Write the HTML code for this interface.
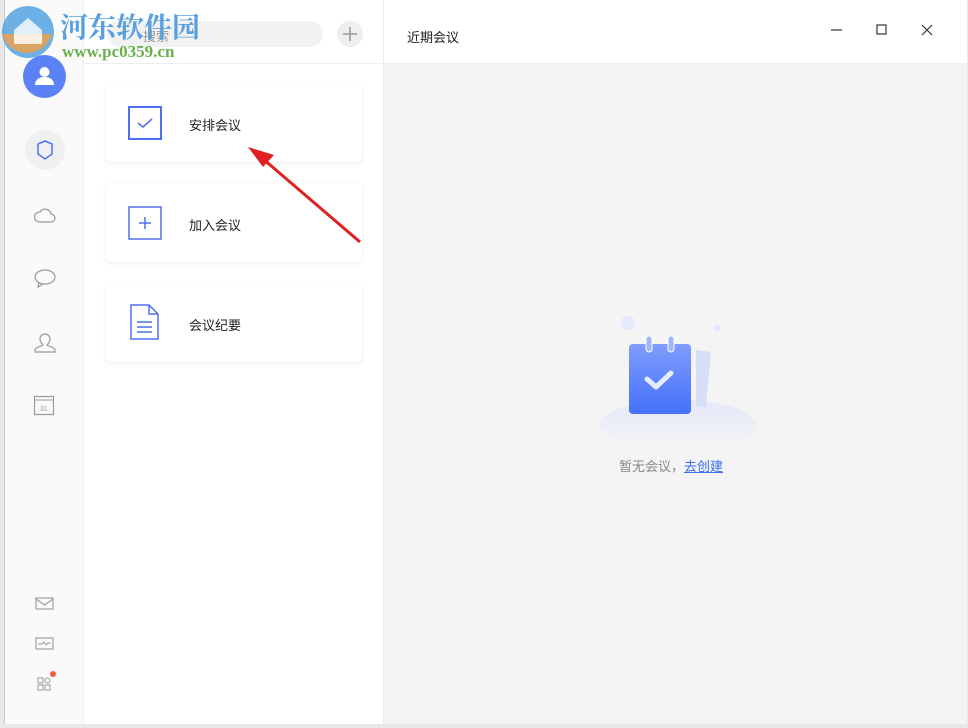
<!DOCTYPE html><html><head><meta charset="utf-8"><style>
*{margin:0;padding:0;box-sizing:border-box}
body{width:968px;height:728px;background:#e8e8e8;font-family:"Liberation Sans","Noto Sans CJK SC",sans-serif;position:relative;overflow:hidden}
.win{position:absolute;left:4px;top:0;width:962px;height:724px;background:#fff;border-left:1px solid #ccc}
.side{position:absolute;left:0;top:0;width:79px;height:724px;background:#fafafa;border-right:1px solid #eee}
.mid{position:absolute;left:79px;top:0;width:300px;height:724px;background:#fff;border-right:1px solid #eee}
.right{position:absolute;left:379px;top:0;width:583px;height:724px;background:#f4f4f4}
.rh{height:64px;background:#fff;border-bottom:1px solid #eee;position:relative}
.card{position:absolute;left:22px;width:256px;height:78px;background:#fff;border-radius:6px;box-shadow:0 1px 6px rgba(0,0,0,.08)}
.card span{position:absolute;left:83px;top:31px;font-size:13px;color:#222}
.card svg{position:absolute;left:22px;top:22px}
.ico{position:absolute}
</style></head><body>
<div class="win">
<div class="side">
 <div class="ico" style="left:18px;top:55px;width:43px;height:43px;border-radius:50%;background:#5b82f5"><svg width="43" height="43"><circle cx="21.5" cy="17" r="5" fill="#fff"/><path d="M12 30c0-6 5-8 9.5-8s9.5 2 9.5 8z" fill="#fff"/></svg></div>
 <div class="ico" style="left:20px;top:130px;width:40px;height:40px;border-radius:50%;background:#f0f0f0"><svg width="40" height="40"><path d="M13 14l7-3 7 3v10l-7 5-7-5z" fill="none" stroke="#4f74f0" stroke-width="1.5"/></svg></div>
 <svg class="ico" style="left:26px;top:200px" width="28" height="28"><path d="M8 22h12a4 4 0 0 0 0-8 6 6 0 0 0-11-2 5 5 0 0 0-1 10z" fill="none" stroke="#999" stroke-width="1.2"/></svg>
 <svg class="ico" style="left:26px;top:264px" width="28" height="28"><ellipse cx="14" cy="13" rx="10" ry="7" fill="none" stroke="#999" stroke-width="1.2"/><path d="M8 18l-1 5 5-3" fill="none" stroke="#999" stroke-width="1.2"/></svg>
 <svg class="ico" style="left:26px;top:328px" width="28" height="28"><path d="M9 11a5 5 0 0 1 10 0c0 3-2 5-3 6 0 1 8 2 8 5v2H4v-2c0-3 8-4 8-5-1-1-3-3-3-6z" fill="none" stroke="#999" stroke-width="1.2"/></svg>
 <svg class="ico" style="left:28px;top:394px" width="24" height="24"><rect x="1.5" y="2.5" width="19" height="18" fill="none" stroke="#999" stroke-width="1.2"/><path d="M1.5 6h19" stroke="#999"/><text x="7" y="17" font-size="7" fill="#999" font-family="Liberation Sans">31</text></svg>
 <svg class="ico" style="left:30px;top:596px" width="20" height="16"><rect x="1" y="2" width="17" height="11" fill="none" stroke="#999" stroke-width="1.1"/><path d="M1 3l8.5 6L18 3" fill="none" stroke="#999" stroke-width="1.1"/></svg>
 <svg class="ico" style="left:30px;top:636px" width="20" height="16"><rect x="1" y="2" width="17" height="11" fill="none" stroke="#999" stroke-width="1.1"/><path d="M3 8h4l2-2 2 3 2-2h3" fill="none" stroke="#999"/></svg>
 <svg class="ico" style="left:30px;top:670px" width="24" height="24"><rect x="3" y="8" width="5" height="5" fill="none" stroke="#999"/><rect x="3" y="15" width="5" height="5" fill="none" stroke="#999"/><rect x="10" y="15" width="5" height="5" fill="none" stroke="#999"/><circle cx="12.5" cy="10.5" r="2.5" fill="none" stroke="#999"/><circle cx="18" cy="4" r="3" fill="#f55b3b"/></svg>
</div>
<div class="mid">
 <div style="position:absolute;left:23px;top:21px;width:216px;height:26px;border-radius:13px;background:#f2f2f2"><span style="position:absolute;left:36px;top:5px;font-size:13px;color:#999">搜索</span></div>
 <div style="position:absolute;left:253px;top:21px;width:26px;height:26px;border-radius:50%;background:#eee"><svg width="26" height="26"><path d="M13 6v14M6 13h14" stroke="#999" stroke-width="1.6"/></svg></div>
 <div style="position:absolute;left:0;top:63px;width:299px;border-top:1px solid #eee"></div>
 <div class="card" style="top:84px"><svg width="34" height="34"><rect x="1" y="1" width="32" height="32" fill="none" stroke="#4f6ff0" stroke-width="2"/><path d="M10 17l5 4 9-8" fill="none" stroke="#4f6ff0" stroke-width="1.6"/></svg><span>安排会议</span></div>
 <div class="card" style="top:184px"><svg width="34" height="34"><rect x="1" y="1" width="32" height="32" fill="none" stroke="#4f6ff0" stroke-width="1.5"/><path d="M17 11v12M11 17h12" stroke="#4f6ff0" stroke-width="1.5"/></svg><span>加入会议</span></div>
 <div class="card" style="top:284px"><svg width="34" height="36" style="top:20px"><path d="M3 1h18l9 9v25H3z" fill="none" stroke="#4f6ff0" stroke-width="1.5"/><path d="M21 1v9h9M9 18h15M9 23h15M9 28h15" fill="none" stroke="#4f6ff0" stroke-width="1.5"/></svg><span>会议纪要</span></div>
</div>
<div class="right">
 <div class="rh"><span style="position:absolute;left:23px;top:27px;font-size:13px;color:#222">近期会议</span>
 <svg style="position:absolute;left:445px;top:22px" width="120" height="16"><path d="M2 8h11" stroke="#333" stroke-width="1.2"/><rect x="48" y="3" width="9" height="9" fill="none" stroke="#333" stroke-width="1.2"/><path d="M93 3l10 10M103 3l-10 10" stroke="#333" stroke-width="1.2"/></svg></div>
 <svg style="position:absolute;left:212px;top:310px" width="160" height="130">
  <defs><linearGradient id="g" x1="0" y1="0" x2="0" y2="1"><stop offset="0" stop-color="#7f9dfb"/><stop offset="1" stop-color="#4470fb"/></linearGradient><linearGradient id="e" x1="0" y1="0" x2="0" y2="1"><stop offset="0" stop-color="#e4e8fa"/><stop offset="1" stop-color="#f4f4f4"/></linearGradient></defs>
  <ellipse cx="82" cy="115" rx="78" ry="25" fill="url(#e)"/>
  <circle cx="32" cy="13" r="7" fill="#e4e9fb"/><circle cx="121" cy="18" r="3.5" fill="#e4e9fb"/><circle cx="40" cy="48" r="2" fill="#e4e9fb"/>
  <path d="M100 40l15 2-5 55-10-1z" fill="#d6def8"/>
  <rect x="33" y="34" width="62" height="70" rx="4" fill="url(#g)"/>
  <rect x="50" y="26" width="6" height="16" rx="3" fill="#9fb5fc" stroke="#fff"/><rect x="72" y="26" width="6" height="16" rx="3" fill="#9fb5fc" stroke="#fff"/>
  <path d="M51 69l9 8 15-14" fill="none" stroke="#e6ecff" stroke-width="5" stroke-linecap="round" stroke-linejoin="round"/>
 </svg>
 <div style="position:absolute;left:235px;top:456px;font-size:13px;color:#888">暂无会议，<span style="color:#3b6cf5;text-decoration:underline">去创建</span></div>
</div>
</div>
<svg style="position:absolute;left:240px;top:140px" width="130" height="110"><path d="M120 102L22 18" stroke="#e02020" stroke-width="3"/><path d="M8 7l26 8-11 12z" fill="#e02020"/></svg>
<div style="position:absolute;left:60px;top:6px;font-size:28px;font-weight:bold;color:#5aa0e0;font-family:'Liberation Serif','Noto Serif CJK SC',serif">河东软件园</div>
<div style="position:absolute;left:62px;top:42px;font-size:17px;font-weight:bold;color:#6ab04c;font-family:'Liberation Serif',serif">www.pc0359.cn</div>
<svg style="position:absolute;left:0;top:4px" width="58" height="58"><circle cx="28" cy="28" r="26" fill="#4a9ee0" opacity=".8"/><path d="M2 30a26 26 0 0 0 50 0z" fill="#f4a040" opacity=".8"/><path d="M14 26l14-12 14 12v14H14z" fill="#fff" opacity=".8"/></svg>
</body></html>
